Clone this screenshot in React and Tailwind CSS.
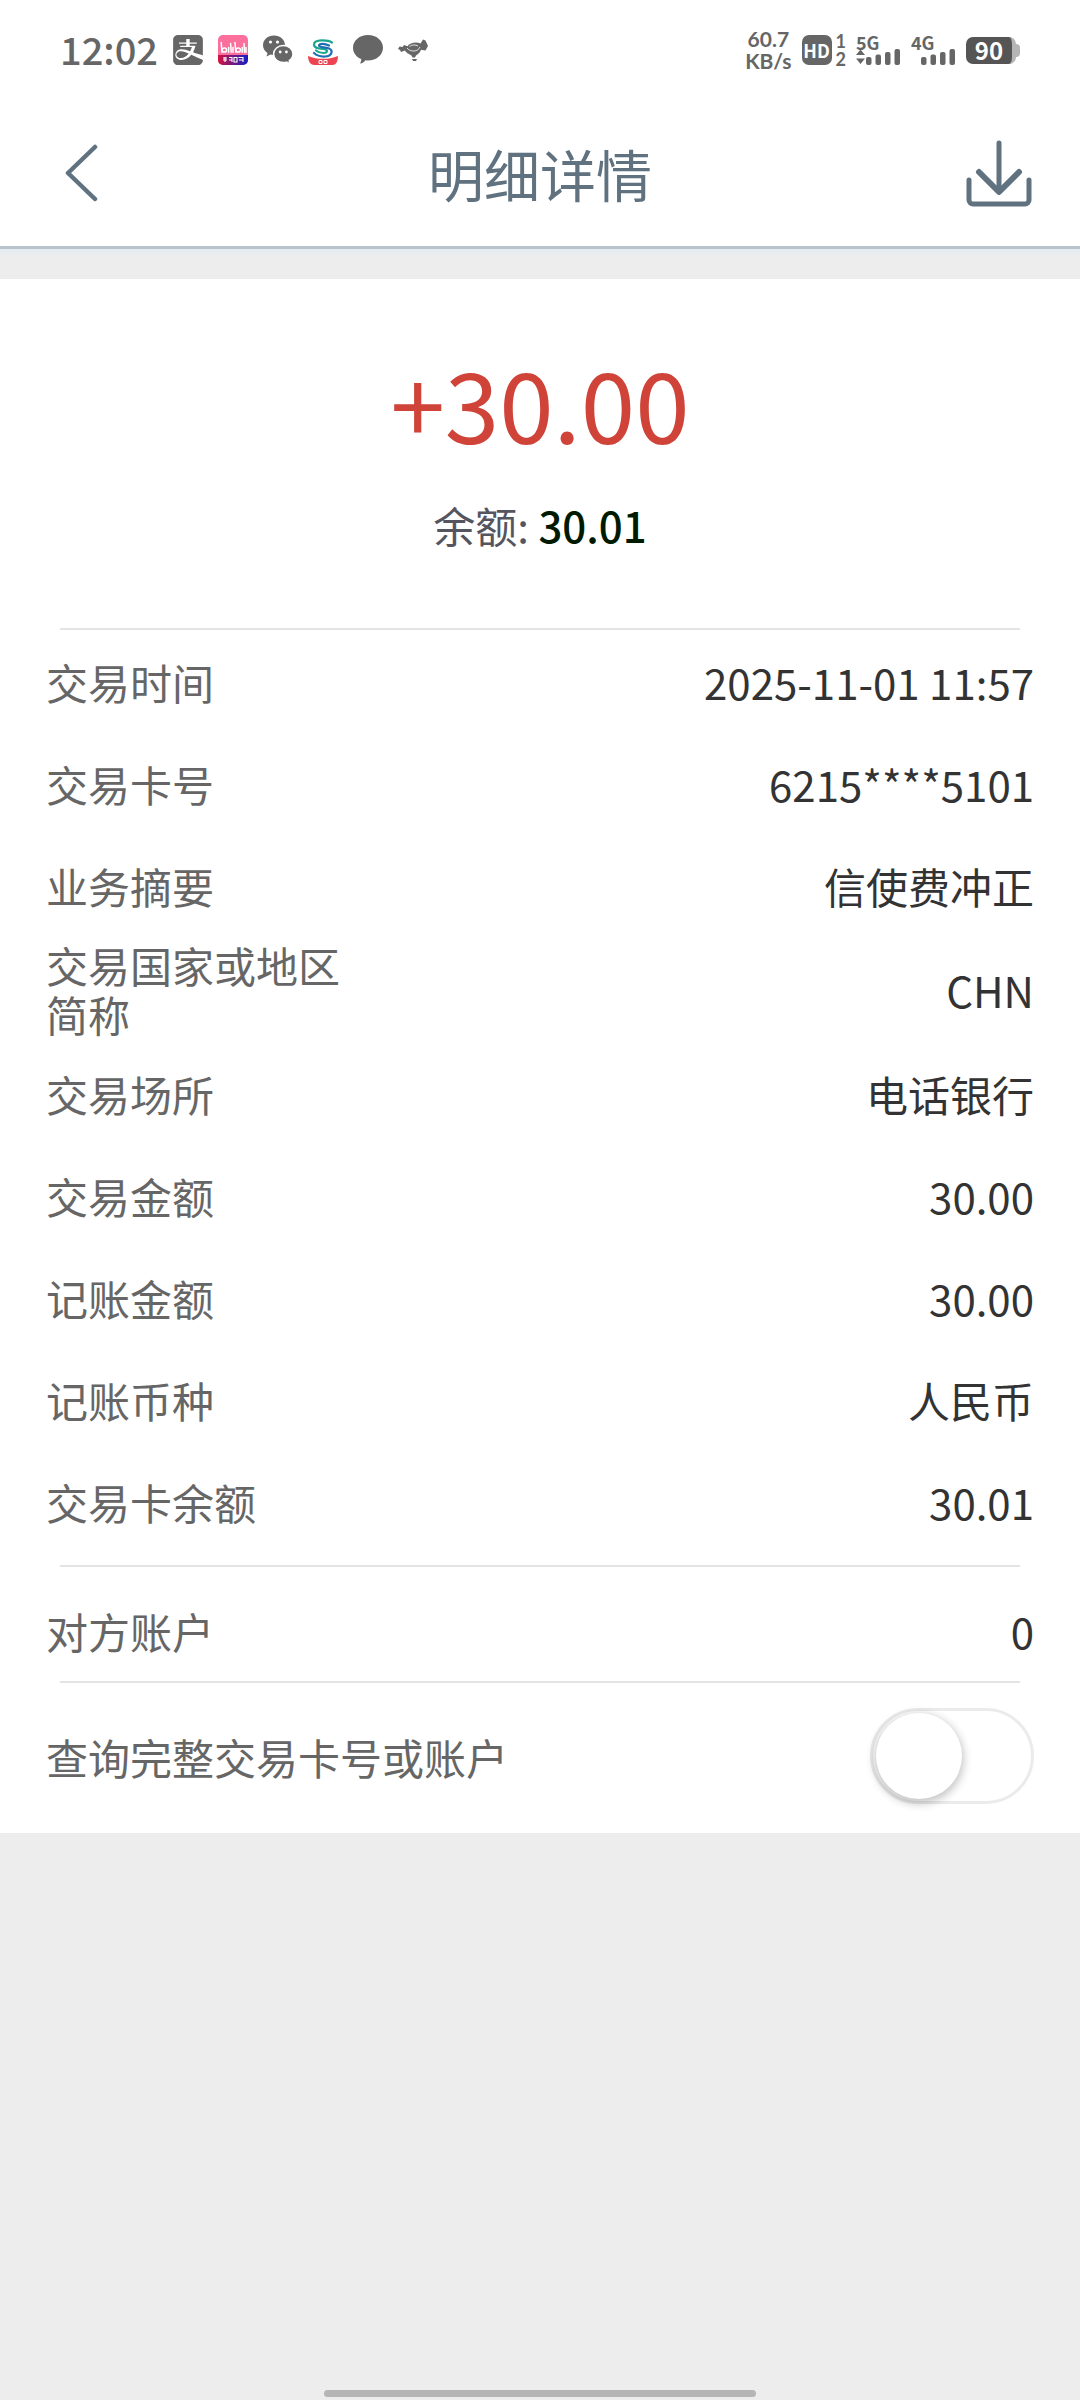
import React, { useState } from 'react';
import { SiAlipay } from 'react-icons/si';

const details = [
  { label: '交易时间', value: '2025-11-01 11:57' },
  { label: '交易卡号', value: '6215****5101' },
  { label: '业务摘要', value: '信使费冲正' },
  { label: '交易国家或地区简称', value: 'CHN' },
  { label: '交易场所', value: '电话银行' },
  { label: '交易金额', value: '30.00' },
  { label: '记账金额', value: '30.00' },
  { label: '记账币种', value: '人民币' },
  { label: '交易卡余额', value: '30.01' },
];

const BilibiliIcon = () => (
  <svg viewBox="0 0 30 30" className="size-[30px]" aria-hidden="true">
    <defs>
      <linearGradient id="bili-strip" x1="0" x2="1" y1="0" y2="0">
        <stop offset="0" stopColor="#d5123f" />
        <stop offset="0.45" stopColor="#7a1a78" />
        <stop offset="1" stopColor="#1220c8" />
      </linearGradient>
      <clipPath id="bili-clip">
        <rect width="30" height="30" rx="5" />
      </clipPath>
    </defs>
    <g clipPath="url(#bili-clip)">
      <rect width="30" height="30" fill="#fb6f9d" />
      <rect y="20" width="30" height="10" fill="url(#bili-strip)" />
      <g fill="none" stroke="#fff" strokeWidth="1.5" strokeLinecap="round">
        <path d="M3.2 7.5 4 17.2" />
        <ellipse cx="6.4" cy="15" rx="2.2" ry="2.1" />
        <path d="M10.6 12.4v4.8M12.6 8.5l.6 8.7M15 12.4v4.8" />
        <path d="M17 7.5l.8 9.7" />
        <ellipse cx="20.2" cy="15" rx="2.2" ry="2.1" />
        <path d="M24.2 12.4v4.8M26 8.5l.5 8.7M28 12.4v4.8" />
      </g>
      <path
        d="M5 23h4M5 25h4M7 22v5M11 22.5h3v4.5M11 25h3M16 22.5h3v4.5h-3zM20.500 22.500h4.500v4.500M21 25h4"
        fill="none"
        stroke="#fff"
        strokeWidth="1.1"
      />
    </g>
  </svg>
);

const WechatIcon = () => (
  <svg viewBox="0 0 30 30" className="size-[30px]" aria-hidden="true">
    <path d="M11 0.500c6 0 11 4.200 11 9.700S17 20 11 20c-1.200 0-2.400-.2-3.500-.5L3.500 21.500l1-3.500C1.800 16.200 0 13.500 0 10.200 0 4.700 5 .5 11 .5z" fill="#666" />
    <path
      d="M20.300 10.500c5.300 0 9.700 3.800 9.700 8.600 0 2.700-1.500 5-3.700 6.600l.9 3.300-3.600-1.900c-1 .3-2.100.5-3.300.5-5.300 0-9.700-3.700-9.700-8.500s4.400-8.600 9.700-8.600z"
      fill="#666"
      stroke="#fff"
      strokeWidth="1.500"
    />
    <g fill="#fff">
      <circle cx="7.500" cy="7" r="1.600" />
      <circle cx="14.500" cy="7" r="1.600" />
      <circle cx="17.200" cy="17" r="1.400" />
      <circle cx="23.400" cy="17" r="1.400" />
    </g>
  </svg>
);

const MinshengIcon = () => (
  <svg viewBox="0 0 30 30" className="size-[30px]" aria-hidden="true">
    <path d="M0 21c5 2 10 2.800 15 2.800S25 23 30 21c-.2 5-1.500 9-5.500 9h-18C2 30 .3 26 0 21z" fill="#ee4450" />
    <path d="M11 25.500h3v3h-3zM16 25.500h3v3h-3z" fill="none" stroke="#fff" strokeWidth="1" />
    <g fill="none" strokeWidth="2.200" strokeLinecap="round">
      <path d="M24 7.500C20 4.800 6 3.800 6 9.500c0 5 7 3.500 11 4.800 3 1 2.500 3.700-1.500 3.700-3 0-5.500-.8-7.500-2.500" stroke="#1aa58c" />
      <path d="M21 10.500c-4-2-10-2.200-10 0s6 1.300 10 3c4.500 2 3 7.500-4 8-4.500.3-8-.8-11-3.500" stroke="#1f6fb4" />
    </g>
  </svg>
);

const BubbleIcon = () => (
  <svg viewBox="0 0 30 30" className="size-[30px]" aria-hidden="true">
    <path
      d="M15 0c8.400 0 15 5.500 15 12.700S23.400 25.500 15 25.500c-.9 0-1.800 0-2.600-.2-1.300 1.600-3 3-5.400 3.300.9-1.400 1.300-3 1.200-4.600C3.300 22 0 17.800 0 12.700 0 5.500 6.600 0 15 0z"
      fill="#666"
    />
  </svg>
);

const HandshakeIcon = () => (
  <svg viewBox="0 0 30 30" className="size-[30px]" aria-hidden="true">
    <path
      d="M0 14l1.500-2.500 3 .5 1.500-2 3.500 1.200C12 7.500 18.500 6.500 22.500 8.500L25 4.500l2.500 1L30 11l-2.500 4.500-4.500-.8c-.8 2.500-2.500 4.300-5 5.800l-1 2h-2.500L13.500 20.500C10.500 19 8 17.500 7 15.500L3 17l-1-2z"
      fill="#666"
    />
    <path d="M14 24h5l-1 2h-3z" fill="#666" />
    <path d="M9 13c2 2.500 4.500 3 7 3s5-1.500 6-4M11.500 11.500c2.500-2 6-2 8.500-.5" fill="none" stroke="#fff" strokeWidth="0.800" />
  </svg>
);

const DataArrows = () => (
  <path d="M0 6 4.500 0.500 9 6zM0 9.500h9L4.500 15z" fill="#666" />
);

const Signal = ({ name, arrows }) => (
  <div className="flex flex-col">
    <span className="h-[14px] text-[18px] leading-[14px] font-bold">{name}</span>
    <svg viewBox="0 0 45 16" className="h-[16px] w-[45px]" aria-hidden="true">
      {arrows && <DataArrows />}
      <g fill="#666">
        <rect x="10" y="8" width="5.500" height="8" rx="2" />
        <rect x="19.500" y="5.500" width="5.500" height="10.500" rx="2" />
        <rect x="29" y="3" width="5.500" height="13" rx="2" />
        <rect x="38.500" y="0" width="5.500" height="16" rx="2" />
      </g>
    </svg>
  </div>
);

const StatusBar = () => (
  <div className="flex h-[100px] items-center justify-between bg-white px-[60px] text-[#666]">
    <div className="flex items-center gap-[15px]">
      <span className="pb-[2px] text-[38px] leading-[40px] font-medium">12:02</span>
      <SiAlipay className="size-[30px]" />
      <BilibiliIcon />
      <WechatIcon />
      <MinshengIcon />
      <BubbleIcon />
      <HandshakeIcon />
    </div>

    <div className="flex items-center gap-[10px]">
      <p className="text-center font-['Lato',sans-serif] text-[21px] leading-[22px] font-bold">
        60.7
        <br />
        KB/s
      </p>
      <div className="flex items-center gap-[4px]">
        <span className="flex size-[30px] items-center justify-center rounded-[7px] bg-[#666] text-[18px] font-bold text-white">
          HD
        </span>
        <p className="font-['Lato',sans-serif] text-[18px] leading-[18px] font-bold">
          1<br />2
        </p>
      </div>
      <Signal name="5G" arrows />
      <Signal name="4G" />
      <div className="flex items-center">
        <span className="flex h-[27px] w-[50px] items-center justify-center rounded-[7px] border-r-4 border-[#b5b5b5] bg-[#555] text-[24px] font-bold text-white">
          90
        </span>
        <span className="h-[13px] w-[4px] rounded-r-[4px] bg-[#b5b5b5]" />
      </div>
    </div>
  </div>
);

const Header = () => (
  <header className="flex h-[149px] items-center justify-between border-b-3 border-[#b8c4cb] bg-white px-[46px] text-[#60727f]">
    <button type="button" aria-label="返回" className="flex w-[70px] justify-start pl-[18px]">
      <svg viewBox="0 0 34 58" className="h-[58px] w-[34px]" fill="none" stroke="currentColor" strokeWidth="4.500" strokeLinecap="round" strokeLinejoin="round">
        <path d="M31 3 4 29l27 26" />
      </svg>
    </button>
    <h1 className="text-[56px] leading-[64px]">明细详情</h1>
    <button type="button" aria-label="下载" className="flex w-[70px] justify-end">
      <svg viewBox="0 0 70 68" className="h-[68px] w-[70px]" fill="none" stroke="currentColor" strokeWidth="5" strokeLinecap="round" strokeLinejoin="round">
        <path d="M35 4v48" />
        <path d="M15 33l20 20 20-20" strokeWidth="6" />
        <path d="M5 41v20a4 4 0 0 0 4 4h52a4 4 0 0 0 4-4V41" />
      </svg>
    </button>
  </header>
);

const Divider = () => <hr className="mx-[60px] border-t-2 border-[#e3e4e4]" />;

const DetailRow = ({ label, value }) => (
  <div className="flex min-h-[102px] items-center justify-between py-[4px]">
    <dt className="w-[30%] text-[#666]">{label}</dt>
    <dd className="text-right text-[#333]">{value}</dd>
  </div>
);

export default function App() {
  const [showFull, setShowFull] = useState(false);

  return (
    <div className="flex min-h-screen flex-col bg-[#ededed] font-['Noto_Sans_CJK_SC',sans-serif]">
      <StatusBar />
      <Header />
      <div className="h-[5px] bg-[#e6ecf0]" />

      <main className="mt-[25px] bg-white text-[42px] leading-[49px]">
        {/* Amount */}
        <section className="flex flex-col items-center gap-[45px] pt-[68px] pb-[79px]">
          <p className="text-[98px] leading-[108px] text-[#d04338]">+30.00</p>
          <p className="text-[#55555f]">
            余额: <span className="font-medium text-[#001a00]">30.01</span>
          </p>
        </section>
        <Divider />

        {/* Details */}
        <dl className="px-[46px] pb-[13px]">
          {details.map((item) => (
            <DetailRow key={item.label} label={item.label} value={item.value} />
          ))}
        </dl>
        <Divider />

        <dl className="px-[46px] pt-[12px]">
          <DetailRow label="对方账户" value="0" />
        </dl>
        <Divider />

        {/* Show full card number */}
        <div className="flex h-[150px] items-center justify-between px-[46px] pb-[4px]">
          <label htmlFor="show-full" className="text-[#666]">查询完整交易卡号或账户</label>
          <input
            id="show-full"
            type="checkbox"
            role="switch"
            checked={showFull}
            onChange={(e) => setShowFull(e.target.checked)}
            className="flex h-[96px] w-[164px] appearance-none items-center rounded-full border-3 border-[#ebebeb] bg-white px-[3px] before:size-[86px] before:rounded-full before:bg-white before:shadow-[0_3px_8px_2px_rgba(0,0,0,0.22)] before:content-[''] checked:justify-end checked:bg-[#4cd964]"
          />
        </div>
      </main>

      {/* Home indicator */}
      <div className="mx-auto mt-auto mb-[3px] h-[7px] w-[40%] rounded-full bg-[#b5b5b5]" />
    </div>
  );
}
